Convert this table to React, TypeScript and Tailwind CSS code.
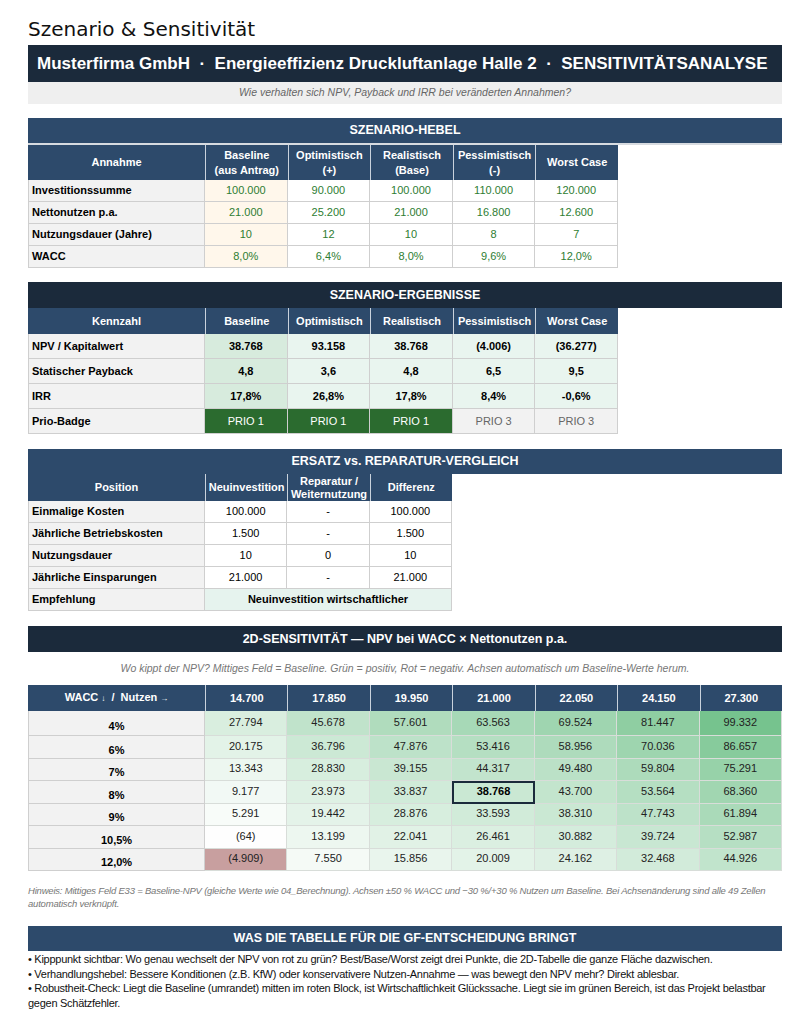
import React from "react";

const FONT = "font-['Liberation_Sans',Arial,sans-serif]";

/**
 * Section bar spanning the full page width.
 */
const SectionBar = ({
  title,
  dark,
  className = "",
}: {
  title: string;
  dark?: boolean;
  className?: string;
}) => (
  <div
    className={`flex items-center justify-center text-[12.5px] font-bold text-white ${
      dark ? "bg-[#1b2a3b]" : "bg-[#2d4a6b]"
    } ${className}`}
  >
    {title}
  </div>
);

const HeadCell = ({ children, first }: { children: React.ReactNode; first?: boolean }) => (
  <div
    className={`flex items-center justify-center bg-[#2d4a6b] px-1 text-center text-[11px] font-bold leading-[15px] text-white ${
      first ? "" : "border-l border-[#c9d2dc]"
    }`}
  >
    {children}
  </div>
);

const LabelCell = ({ children }: { children: React.ReactNode }) => (
  <div className="flex items-center border-b border-l border-r border-[#cfcfcf] bg-[#f2f2f2] pl-[3px] text-[11px] font-bold text-black">
    {children}
  </div>
);

const Cell = ({
  children,
  className = "",
}: {
  children: React.ReactNode;
  className?: string;
}) => (
  <div
    className={`flex items-center justify-center border-b border-r border-[#cfcfcf] text-[11px] ${className}`}
  >
    {children}
  </div>
);

const hebelRows = [
  ["Investitionssumme", "100.000", "90.000", "100.000", "110.000", "120.000"],
  ["Nettonutzen p.a.", "21.000", "25.200", "21.000", "16.800", "12.600"],
  ["Nutzungsdauer (Jahre)", "10", "12", "10", "8", "7"],
  ["WACC", "8,0%", "6,4%", "8,0%", "9,6%", "12,0%"],
];

const ergebnisRows = [
  ["NPV / Kapitalwert", "38.768", "93.158", "38.768", "(4.006)", "(36.277)"],
  ["Statischer Payback", "4,8", "3,6", "4,8", "6,5", "9,5"],
  ["IRR", "17,8%", "26,8%", "17,8%", "8,4%", "-0,6%"],
];

const ersatzRows = [
  ["Einmalige Kosten", "100.000", "-", "100.000"],
  ["Jährliche Betriebskosten", "1.500", "-", "1.500"],
  ["Nutzungsdauer", "10", "0", "10"],
  ["Jährliche Einsparungen", "21.000", "-", "21.000"],
];

const nutzen = ["14.700", "17.850", "19.950", "21.000", "22.050", "24.150", "27.300"];

const sensRows: { wacc: string; values: number[] }[] = [
  { wacc: "4%", values: [27794, 45678, 57601, 63563, 69524, 81447, 99332] },
  { wacc: "6%", values: [20175, 36796, 47876, 53416, 58956, 70036, 86657] },
  { wacc: "7%", values: [13343, 28830, 39155, 44317, 49480, 59804, 75291] },
  { wacc: "8%", values: [9177, 23973, 33837, 38768, 43700, 53564, 68360] },
  { wacc: "9%", values: [5291, 19442, 28876, 33593, 38310, 47743, 61894] },
  { wacc: "10,5%", values: [-64, 13199, 22041, 26461, 30882, 39724, 52987] },
  { wacc: "12,0%", values: [-4909, 7550, 15856, 20009, 24162, 32468, 44926] },
];

// colour scale: white at 0, green at max, dusty red at min
const heatColor = (v: number) => {
  const mix = (a: number[], t: number) =>
    `rgb(${a.map((c) => Math.round(255 - (255 - c) * t)).join(",")})`;
  if (v >= 0) return mix([118, 195, 142], Math.min(v / 99332, 1));
  return mix([200, 159, 159], Math.min(-v / 4909, 1));
};

const fmt = (v: number) => {
  const s = Math.abs(v).toLocaleString("de-DE");
  return v < 0 ? `(${s})` : s;
};

export default function App() {
  return (
    <div className={`${FONT} min-h-[1024px] w-[810px] bg-white px-[28px] pt-[15px] text-black`}>
      <h1 className="font-['DejaVu_Sans',sans-serif] text-[20px] leading-[28px] text-[#111]">
        Szenario &amp; Sensitivität
      </h1>

      <div className="mt-[2px] flex h-[37px] items-center whitespace-pre bg-[#1b2a3b] pl-[9px] text-[17px] font-bold text-white">
        {"Musterfirma GmbH  ·  Energieeffizienz Druckluftanlage Halle 2  ·  SENSITIVITÄTSANALYSE"}
      </div>
      <div className="flex h-[22px] items-center justify-center bg-[#efefef] text-[10.5px] italic text-[#666]">
        Wie verhalten sich NPV, Payback und IRR bei veränderten Annahmen?
      </div>

      {/* Szenario-Hebel */}
      <SectionBar title="SZENARIO-HEBEL" className="mt-[14px] h-[27px] border-b-2 border-[#d7dbe0]" />
      <div className="grid w-[590px] grid-cols-[177px_repeat(5,minmax(0,1fr))] grid-rows-[35px_repeat(4,22px)]">
        <HeadCell first>Annahme</HeadCell>
        <HeadCell>
          Baseline
          <br />
          (aus Antrag)
        </HeadCell>
        <HeadCell>
          Optimistisch
          <br />
          (+)
        </HeadCell>
        <HeadCell>
          Realistisch
          <br />
          (Base)
        </HeadCell>
        <HeadCell>
          Pessimistisch
          <br />
          (-)
        </HeadCell>
        <HeadCell>Worst Case</HeadCell>
        {hebelRows.map((row) => (
          <React.Fragment key={row[0]}>
            <LabelCell>{row[0]}</LabelCell>
            {row.slice(1).map((v, i) => (
              <Cell
                key={i}
                className={`text-[#2e7d32] ${i === 0 ? "bg-[#fff7eb]" : "bg-white"}`}
              >
                {v}
              </Cell>
            ))}
          </React.Fragment>
        ))}
      </div>

      {/* Szenario-Ergebnisse */}
      <SectionBar title="SZENARIO-ERGEBNISSE" dark className="mt-[14px] h-[26px]" />
      <div className="grid w-[590px] grid-cols-[177px_repeat(5,minmax(0,1fr))] grid-rows-[26px_repeat(4,25px)]">
        <HeadCell first>Kennzahl</HeadCell>
        <HeadCell>Baseline</HeadCell>
        <HeadCell>Optimistisch</HeadCell>
        <HeadCell>Realistisch</HeadCell>
        <HeadCell>Pessimistisch</HeadCell>
        <HeadCell>Worst Case</HeadCell>
        {ergebnisRows.map((row) => (
          <React.Fragment key={row[0]}>
            <LabelCell>{row[0]}</LabelCell>
            {row.slice(1).map((v, i) => (
              <Cell
                key={i}
                className={`font-bold ${i === 0 ? "bg-[#d7ebdd]" : "bg-[#e9f5ef]"}`}
              >
                {v}
              </Cell>
            ))}
          </React.Fragment>
        ))}
        <LabelCell>Prio-Badge</LabelCell>
        {["PRIO 1", "PRIO 1", "PRIO 1"].map((p, i) => (
          <Cell key={i} className="bg-[#2b6b2f] text-white">
            {p}
          </Cell>
        ))}
        {["PRIO 3", "PRIO 3"].map((p, i) => (
          <Cell key={i} className="bg-[#f2f2f2] text-[#666]">
            {p}
          </Cell>
        ))}
      </div>

      {/* Ersatz vs. Reparatur */}
      <SectionBar title="ERSATZ vs. REPARATUR-VERGLEICH" className="mt-[15px] h-[25px]" />
      <div className="grid w-[424px] grid-cols-[177px_repeat(3,minmax(0,1fr))] grid-rows-[27px_repeat(5,22px)]">
        <HeadCell first>Position</HeadCell>
        <HeadCell>Neuinvestition</HeadCell>
        <HeadCell>
          <span className="leading-[13px]">
            Reparatur /
            <br />
            Weiternutzung
          </span>
        </HeadCell>
        <HeadCell>Differenz</HeadCell>
        {ersatzRows.map((row) => (
          <React.Fragment key={row[0]}>
            <LabelCell>{row[0]}</LabelCell>
            {row.slice(1).map((v, i) => (
              <Cell key={i} className="bg-white">
                {v}
              </Cell>
            ))}
          </React.Fragment>
        ))}
        <LabelCell>Empfehlung</LabelCell>
        <Cell className="col-span-3 bg-[#e6f3ee] font-bold">Neuinvestition wirtschaftlicher</Cell>
      </div>

      {/* 2D Sensitivität */}
      <SectionBar
        title="2D-SENSITIVITÄT — NPV bei WACC × Nettonutzen p.a."
        dark
        className="mt-[15px] h-[26px]"
      />
      <div className="flex h-[33px] items-center justify-center text-[10.5px] italic text-[#777]">
        Wo kippt der NPV? Mittiges Feld = Baseline. Grün = positiv, Rot = negativ. Achsen automatisch
        um Baseline-Werte herum.
      </div>
      <div className="grid grid-cols-[177px_repeat(7,minmax(0,1fr))] grid-rows-[26px_25px_repeat(6,22.5px)]">
        <HeadCell first>
          <span className="whitespace-pre">
            WACC <span className="text-[8px]">↓</span>  /  Nutzen <span className="text-[8px]">→</span>
          </span>
        </HeadCell>
        {nutzen.map((n) => (
          <HeadCell key={n}>{n}</HeadCell>
        ))}
        {sensRows.map((row) => (
          <React.Fragment key={row.wacc}>
            <div className="flex items-center justify-center border-b border-l border-r border-[#cfcfcf] bg-[#f2f2f2] pt-[6px] text-[11px] font-bold">
              {row.wacc}
            </div>
            {row.values.map((v, i) => {
              const isBase = row.wacc === "8%" && i === 3;
              return (
                <div
                  key={i}
                  className={`flex items-center justify-center pb-[2px] text-[11px] text-[#222] ${
                    isBase
                      ? "border-2 border-[#1b2a3b] font-bold text-black"
                      : "border-b border-r border-[#d8ddd9]"
                  }`}
                  style={{ backgroundColor: heatColor(v) }}
                >
                  {fmt(v)}
                </div>
              );
            })}
          </React.Fragment>
        ))}
      </div>

      <p className="mt-[13px] text-[9.5px] italic leading-[13px] tracking-[-0.2px] text-[#777]">
        Hinweis: Mittiges Feld E33 = Baseline-NPV (gleiche Werte wie 04_Berechnung). Achsen ±50 % WACC
        und −30 %/+30 % Nutzen um Baseline. Bei Achsenänderung sind alle 49 Zellen automatisch
        verknüpft.
      </p>

      <SectionBar
        title="WAS DIE TABELLE FÜR DIE GF-ENTSCHEIDUNG BRINGT"
        className="mt-[16px] h-[25px]"
      />
      <div className="pt-[1px] text-[11px] leading-[14.5px] tracking-[-0.27px] text-[#111]">
        <p>
          • Kipppunkt sichtbar: Wo genau wechselt der NPV von rot zu grün? Best/Base/Worst zeigt drei
          Punkte, die 2D-Tabelle die ganze Fläche dazwischen.
        </p>
        <p>
          • Verhandlungshebel: Bessere Konditionen (z.B. KfW) oder konservativere Nutzen-Annahme — was
          bewegt den NPV mehr? Direkt ablesbar.
        </p>
        <p>
          • Robustheit-Check: Liegt die Baseline (umrandet) mitten im roten Block, ist Wirtschaftlichkeit
          Glückssache. Liegt sie im grünen Bereich, ist das Projekt belastbar gegen Schätzfehler.
        </p>
      </div>
    </div>
  );
}
